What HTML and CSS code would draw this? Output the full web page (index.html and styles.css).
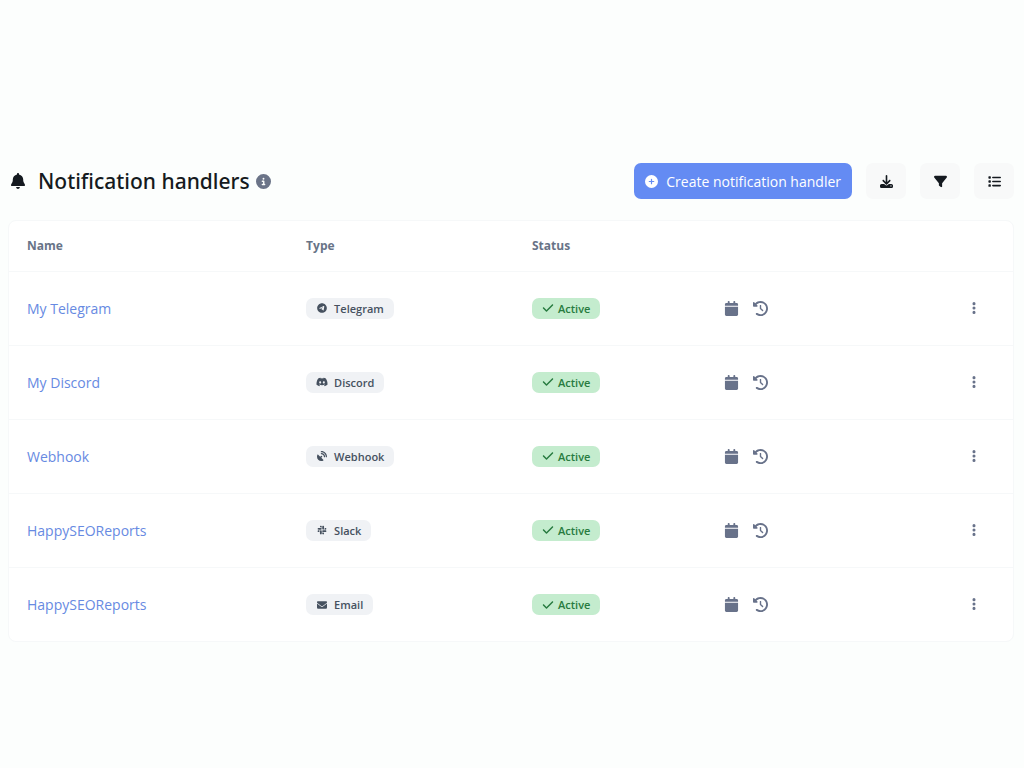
FILE: index.html
```html
<!DOCTYPE html>
<html lang="en">
<head>
<meta charset="utf-8">
<meta name="viewport" content="width=device-width, initial-scale=1">
<title>Notification handlers</title>
<link rel="stylesheet" href="styles.css">
</head>
<body>
<svg class="sprite" aria-hidden="true">
  <symbol id="i-bell" viewBox="0 0 448 512"><path d="M224 0c-17.700 0-32 14.300-32 32v13C112 60 58 126 58 202v32c0 42-14 78-42 112l-8 10c-14 20-10 60 24 60h384c34 0 38-40 24-60l-8-10c-28-34-42-70-42-112v-32c0-76-54-142-134-157V32c0-17.700-14.300-32-32-32zM162 448c8 38 32 60 62 60s54-22 62-60z"/></symbol>
  <symbol id="i-info" viewBox="0 0 512 512"><path d="M256 512A256 256 0 1 0 256 0a256 256 0 1 0 0 512zM216 336h24v-64h-24c-13.300 0-24-10.700-24-24s10.700-24 24-24h48c13.300 0 24 10.700 24 24v88h8c13.300 0 24 10.700 24 24s-10.700 24-24 24h-80c-13.300 0-24-10.700-24-24s10.700-24 24-24zm40-208a32 32 0 1 1 0 64 32 32 0 1 1 0-64z"/></symbol>
  <symbol id="i-plus" viewBox="0 0 512 512"><path d="M256 512A256 256 0 1 0 256 0a256 256 0 1 0 0 512zM232 344v-64h-64c-13.300 0-24-10.700-24-24s10.700-24 24-24h64v-64c0-13.300 10.700-24 24-24s24 10.700 24 24v64h64c13.300 0 24 10.700 24 24s-10.700 24-24 24h-64v64c0 13.300-10.700 24-24 24s-24-10.700-24-24z"/></symbol>
  <symbol id="i-download" viewBox="0 0 512 512"><path d="M288 32c0-17.700-14.300-32-32-32s-32 14.300-32 32v242.700l-73.400-73.400c-12.500-12.500-32.800-12.500-45.300 0s-12.500 32.800 0 45.300l128 128c12.500 12.500 32.800 12.500 45.300 0l128-128c12.500-12.500 12.500-32.800 0-45.300s-32.800-12.500-45.300 0L288 274.700V32zM64 352c-35.300 0-64 28.700-64 64v32c0 35.300 28.700 64 64 64h384c35.300 0 64-28.700 64-64v-32c0-35.300-28.700-64-64-64H346.500l-45.300 45.300c-25 25-65.500 25-90.500 0L165.500 352H64zm368 56a24 24 0 1 1 0 48 24 24 0 1 1 0-48z"/></symbol>
  <symbol id="i-filter" viewBox="0 0 512 512"><path d="M3.900 54.900C10.500 40.900 24.500 32 40 32h432c15.500 0 29.500 8.900 36.100 22.900s4.600 30.500-5.200 42.500L320 320.900V448c0 12.100-6.800 23.200-17.700 28.600s-23.800 4.300-33.500-3l-64-48c-8.100-6-12.800-15.500-12.800-25.600v-79.100L9 97.300C-.7 85.400-2.800 68.800 3.900 54.900z"/></symbol>
  <symbol id="i-list" viewBox="0 0 512 512"><path d="M40 48c-13.300 0-24 10.700-24 24v48c0 13.300 10.700 24 24 24h48c13.300 0 24-10.700 24-24V72c0-13.300-10.700-24-24-24H40zm152 16a32 32 0 0 0 0 64h288a32 32 0 0 0 0-64H192zm0 160a32 32 0 0 0 0 64h288a32 32 0 0 0 0-64H192zm0 160a32 32 0 0 0 0 64h288a32 32 0 0 0 0-64H192zM16 232v48c0 13.300 10.700 24 24 24h48c13.300 0 24-10.700 24-24v-48c0-13.300-10.700-24-24-24H40c-13.300 0-24 10.700-24 24zm24 136c-13.300 0-24 10.700-24 24v48c0 13.300 10.700 24 24 24h48c13.300 0 24-10.700 24-24v-48c0-13.300-10.700-24-24-24H40z"/></symbol>
  <symbol id="i-telegram" viewBox="0 0 496 512"><path d="M248 8C111 8 0 119 0 256s111 248 248 248 248-111 248-248S385 8 248 8zm115 168.700c-3.700 39.200-19.900 134.400-28.100 178.300-3.500 18.600-10.300 24.800-16.900 25.400-14.400 1.300-25.300-9.500-39.300-18.700-21.800-14.300-34.200-23.200-55.300-37.200-24.500-16.100-8.600-25 5.300-39.500 3.700-3.800 67.100-61.500 68.300-66.700.2-.7.300-3.100-1.200-4.400s-3.600-.8-5.100-.5q-3.300.7-104.600 69.100-14.800 10.200-26.900 9.900c-8.900-.2-25.900-5-38.600-9.100-15.500-5-27.900-7.700-26.800-16.300q.8-6.700 18.500-13.700 108.400-47.200 144.600-62.300c68.900-28.600 83.200-33.600 92.500-33.800 2.100 0 6.600.5 9.600 2.900a10.500 10.500 0 0 1 3.500 6.700 43.800 43.800 0 0 1 .5 9.900z"/></symbol>
  <symbol id="i-discord" viewBox="0 0 640 512"><path d="M524.500 69.800a1.500 1.500 0 0 0-.8-.7A485 485 0 0 0 404.100 32a1.800 1.800 0 0 0-1.900.9 338 338 0 0 0-14.900 30.600 448 448 0 0 0-134.400 0 310 310 0 0 0-15.100-30.600 1.900 1.900 0 0 0-1.900-.9 484 484 0 0 0-119.600 37.100 1.700 1.700 0 0 0-.8.700C39.300 183.700 18.400 294.700 28.700 404.400a2 2 0 0 0 .8 1.400 488 488 0 0 0 146.800 74.200 1.900 1.900 0 0 0 2.100-.7 348 348 0 0 0 30-48.800 1.900 1.900 0 0 0-1-2.600 321 321 0 0 1-45.900-21.900 1.900 1.900 0 0 1-.2-3.100c3.100-2.300 6.200-4.700 9.100-7.100a1.800 1.800 0 0 1 1.900-.3c96.200 43.900 200.400 43.900 295.500 0a1.800 1.800 0 0 1 1.900.2c2.900 2.400 6 4.900 9.100 7.200a1.900 1.900 0 0 1-.2 3.100 301 301 0 0 1-45.900 21.800 1.900 1.900 0 0 0-1 2.600 391 391 0 0 0 30 48.800 1.900 1.900 0 0 0 2.100.7 486 486 0 0 0 147-74.200 1.900 1.900 0 0 0 .8-1.400C623.700 277.600 590.900 167.500 524.500 69.800zM222.500 337.600c-29 0-52.800-26.600-52.800-59.200s23.400-59.300 52.800-59.300c29.700 0 53.300 26.800 52.800 59.200 0 32.700-23.400 59.300-52.800 59.300zm195.400 0c-29 0-52.800-26.600-52.800-59.200s23.300-59.300 52.800-59.300c29.700 0 53.300 26.800 52.800 59.200 0 32.700-23.200 59.300-52.800 59.300z"/></symbol>
  <symbol id="i-webhook" viewBox="0 0 512 512"><path d="M192 32c0-17.700 14.300-32 32-32 159.100 0 288 128.900 288 288 0 17.700-14.300 32-32 32s-32-14.300-32-32c0-123.700-100.300-224-224-224-17.700 0-32-14.300-32-32zM60.600 190c-12-12-33-10-41.400 8C6.900 228 0 262 0 296c0 119 97 216 216 216 34 0 68-7 98-19 18-8 20-29 8-41L218 348l24-24a40 40 0 1 0-52-52l-24 24L60.600 190zM224 96c-17.700 0-32 14.300-32 32s14.300 32 32 32c70.700 0 128 57.300 128 128 0 17.700 14.300 32 32 32s32-14.300 32-32c0-106-86-192-192-192z"/></symbol>
  <symbol id="i-slack" viewBox="0 0 448 512"><path d="M94.100 315.100c0 25.900-21.200 47.100-47.100 47.100S0 341 0 315.100 21.200 268 47.100 268h47.100v47.100zm23.700 0c0-25.900 21.200-47.100 47.100-47.100s47.100 21.200 47.100 47.100v117.800c0 25.900-21.200 47.100-47.100 47.100s-47.100-21.200-47.100-47.100V315.100zm47.100-189c-25.900 0-47.100-21.200-47.100-47.100S139 32 164.900 32 212 53.200 212 79.100v47.100h-47.100zm0 23.700c25.900 0 47.100 21.200 47.100 47.100S190.800 244 164.900 244H47.100C21.200 244 0 222.800 0 196.900s21.200-47.100 47.100-47.100h117.800zm189 47.100c0-25.900 21.200-47.100 47.100-47.100s47.100 21.200 47.100 47.100-21.200 47.100-47.100 47.100h-47.100v-47.100zm-23.700 0c0 25.900-21.200 47.100-47.100 47.100S236 222.800 236 196.900V79.100C236 53.200 257.200 32 283.100 32s47.100 21.200 47.100 47.100v117.800zm-47.100 189c25.900 0 47.100 21.200 47.100 47.100S309 480 283.100 480 236 458.800 236 432.900v-47.100h47.100zm0-23.700c-25.900 0-47.100-21.200-47.100-47.100S257.200 268 283.100 268h117.800c25.900 0 47.100 21.200 47.100 47.100s-21.200 47.100-47.100 47.100H283.100z"/></symbol>
  <symbol id="i-email" viewBox="0 0 512 512"><path d="M48 64C21.500 64 0 85.500 0 112c0 15.100 7.100 29.300 19.200 38.400l217.600 163.200c11.400 8.500 27 8.500 38.400 0l217.600-163.200c12.100-9.100 19.200-23.300 19.200-38.400 0-26.500-21.500-48-48-48H48zM0 176v208c0 35.300 28.700 64 64 64h384c35.300 0 64-28.700 64-64V176L294.400 339.200c-22.800 17.100-54 17.100-76.800 0L0 176z"/></symbol>
  <symbol id="i-check" viewBox="0 0 448 512"><path d="M438.600 105.400c12.500 12.500 12.500 32.800 0 45.300l-256 256c-12.500 12.500-32.800 12.500-45.300 0l-128-128c-12.500-12.500-12.500-32.800 0-45.300s32.800-12.500 45.300 0L160 338.700l233.400-233.300c12.500-12.500 32.800-12.500 45.300 0z"/></symbol>
  <symbol id="i-calendar" viewBox="0 0 448 512"><path d="M96 32v32H48C21.500 64 0 85.500 0 112v48h448v-48c0-26.500-21.500-48-48-48h-48V32c0-17.700-14.300-32-32-32s-32 14.300-32 32v32H160V32c0-17.700-14.300-32-32-32S96 14.300 96 32zm352 160H0v272c0 26.500 21.500 48 48 48h352c26.500 0 48-21.500 48-48V192z"/></symbol>
  <symbol id="i-history" viewBox="0 0 512 512"><path d="M75 75 41 41C25.900 25.900 0 36.600 0 57.900V168c0 13.300 10.700 24 24 24h110.100c21.400 0 32.100-25.900 17-41l-30.800-30.800C155 85.500 203 64 256 64c106 0 192 86 192 192s-86 192-192 192c-40.800 0-78.600-12.700-109.700-34.400-14.500-10.100-34.400-6.600-44.600 7.900s-6.600 34.400 7.900 44.600C151.200 495 201.700 512 256 512c141.400 0 256-114.600 256-256S397.400 0 256 0C185.300 0 121.300 28.700 75 75zm181 53c-13.300 0-24 10.700-24 24v104c0 6.400 2.500 12.500 7 17l72 72c9.400 9.400 24.600 9.400 33.900 0s9.400-24.600 0-33.900l-65-65V152c0-13.300-10.700-24-24-24z"/></symbol>
  <symbol id="i-dots" viewBox="0 0 128 512"><path d="M64 360a56 56 0 1 0 0 112 56 56 0 1 0 0-112zm0-160a56 56 0 1 0 0 112 56 56 0 1 0 0-112zm56-104A56 56 0 1 0 8 96a56 56 0 1 0 112 0z"/></symbol>
</svg>

<main class="page">
  <header class="toolbar">
    <div class="heading">
      <svg class="icon bell" aria-hidden="true"><use href="#i-bell"/></svg>
      <h1 class="title">Notification handlers</h1>
      <svg class="icon info" role="img" aria-label="Information"><use href="#i-info"/></svg>
    </div>
    <div class="actions">
      <button class="btn btn-primary" type="button"><svg class="icon plus" aria-hidden="true"><use href="#i-plus"/></svg>Create notification handler</button>
      <button class="btn btn-light" type="button" aria-label="Export"><svg class="icon tool" aria-hidden="true"><use href="#i-download"/></svg></button>
      <button class="btn btn-light" type="button" aria-label="Filters"><svg class="icon tool" aria-hidden="true"><use href="#i-filter"/></svg></button>
      <button class="btn btn-light" type="button" aria-label="Bulk actions"><svg class="icon tool" aria-hidden="true"><use href="#i-list"/></svg></button>
    </div>
  </header>

  <div class="card">
    <table class="table">
      <thead>
        <tr><th class="col-name" scope="col">Name</th><th class="col-type" scope="col">Type</th><th class="col-status" scope="col">Status</th><td></td><td></td></tr>
      </thead>
      <tbody>
        <tr>
          <td><a class="name" href="#">My Telegram</a></td>
          <td><span class="badge"><svg class="icon kind" aria-hidden="true"><use href="#i-telegram"/></svg>Telegram</span></td>
          <td><span class="badge badge-active"><svg class="icon check" aria-hidden="true"><use href="#i-check"/></svg>Active</span></td>
          <td><div class="dates"><svg class="icon date" role="img" aria-label="Created"><use href="#i-calendar"/></svg><svg class="icon date" role="img" aria-label="Last changed"><use href="#i-history"/></svg></div></td>
          <td class="col-menu"><button class="menu" type="button" aria-label="Options"><svg class="icon dots" aria-hidden="true"><use href="#i-dots"/></svg></button></td>
        </tr>
        <tr>
          <td><a class="name" href="#">My Discord</a></td>
          <td><span class="badge"><svg class="icon kind" aria-hidden="true"><use href="#i-discord"/></svg>Discord</span></td>
          <td><span class="badge badge-active"><svg class="icon check" aria-hidden="true"><use href="#i-check"/></svg>Active</span></td>
          <td><div class="dates"><svg class="icon date" role="img" aria-label="Created"><use href="#i-calendar"/></svg><svg class="icon date" role="img" aria-label="Last changed"><use href="#i-history"/></svg></div></td>
          <td class="col-menu"><button class="menu" type="button" aria-label="Options"><svg class="icon dots" aria-hidden="true"><use href="#i-dots"/></svg></button></td>
        </tr>
        <tr>
          <td><a class="name" href="#">Webhook</a></td>
          <td><span class="badge"><svg class="icon kind" aria-hidden="true"><use href="#i-webhook"/></svg>Webhook</span></td>
          <td><span class="badge badge-active"><svg class="icon check" aria-hidden="true"><use href="#i-check"/></svg>Active</span></td>
          <td><div class="dates"><svg class="icon date" role="img" aria-label="Created"><use href="#i-calendar"/></svg><svg class="icon date" role="img" aria-label="Last changed"><use href="#i-history"/></svg></div></td>
          <td class="col-menu"><button class="menu" type="button" aria-label="Options"><svg class="icon dots" aria-hidden="true"><use href="#i-dots"/></svg></button></td>
        </tr>
        <tr>
          <td><a class="name" href="#">HappySEOReports</a></td>
          <td><span class="badge"><svg class="icon kind" aria-hidden="true"><use href="#i-slack"/></svg>Slack</span></td>
          <td><span class="badge badge-active"><svg class="icon check" aria-hidden="true"><use href="#i-check"/></svg>Active</span></td>
          <td><div class="dates"><svg class="icon date" role="img" aria-label="Created"><use href="#i-calendar"/></svg><svg class="icon date" role="img" aria-label="Last changed"><use href="#i-history"/></svg></div></td>
          <td class="col-menu"><button class="menu" type="button" aria-label="Options"><svg class="icon dots" aria-hidden="true"><use href="#i-dots"/></svg></button></td>
        </tr>
        <tr>
          <td><a class="name" href="#">HappySEOReports</a></td>
          <td><span class="badge"><svg class="icon kind" aria-hidden="true"><use href="#i-email"/></svg>Email</span></td>
          <td><span class="badge badge-active"><svg class="icon check" aria-hidden="true"><use href="#i-check"/></svg>Active</span></td>
          <td><div class="dates"><svg class="icon date" role="img" aria-label="Created"><use href="#i-calendar"/></svg><svg class="icon date" role="img" aria-label="Last changed"><use href="#i-history"/></svg></div></td>
          <td class="col-menu"><button class="menu" type="button" aria-label="Options"><svg class="icon dots" aria-hidden="true"><use href="#i-dots"/></svg></button></td>
        </tr>
      </tbody>
    </table>
  </div>
</main>
</body>
</html>
```
FILE: styles.css
```css
* { box-sizing: border-box; }

body {
  margin: 0;
  background: #fcfefd;
  color: #151a20;
  font-family: "Segoe UI", "Open Sans", "Noto Sans", sans-serif;
  font-size: 14px;
}

.sprite { position: absolute; width: 0; height: 0; }

.icon {
  display: block;
  flex: none;
  fill: currentColor;
}

.page { padding: 163px 10px 24px 8px; }

.toolbar {
  display: flex;
  align-items: center;
  justify-content: space-between;
  gap: 16px;
  margin-bottom: 21px;
}

.heading {
  display: flex;
  align-items: center;
  padding-left: 2px;
}

.bell { width: 16px; height: 16px; margin-right: 12px; }

.title {
  margin: 0;
  font-family: "Segoe UI", "Noto Sans", sans-serif;
  font-size: 21px;
  font-weight: 500;
  line-height: 28px;
}

.info { width: 15px; height: 15px; margin-left: 6px; color: #6b7488; }

.actions { display: flex; gap: 14px; }

.btn {
  display: flex;
  align-items: center;
  justify-content: center;
  height: 36px;
  border: 0;
  border-radius: 7px;
  font: inherit;
  cursor: pointer;
}

.btn-primary {
  gap: 8px;
  padding: 0 11px;
  background: #648bf3;
  color: #fff;
}

.btn-light {
  width: 40px;
  background: #f8f9f9;
  color: #151a20;
}

.plus { width: 13px; height: 13px; }
.tool { width: 13px; height: 13px; }

.card {
  overflow: hidden;
  border: 1px solid #f6f8f9;
  border-radius: 8px;
  background: #fff;
}

.table {
  width: 100%;
  border-collapse: collapse;
  table-layout: fixed;
}

.table th,
.table td {
  height: 74px;
  padding: 0 18px;
  border-top: 1px solid #f6f8f9;
  text-align: left;
  vertical-align: middle;
}

.table thead th,
.table thead td {
  height: 50px;
  border-top: 0;
  color: #687387;
  font-size: 12px;
  font-weight: 700;
}

.table .col-name { width: 27.8%; }
.table .col-type { width: 22.5%; }
.table .col-status { width: 19.1%; }
.table .col-menu { padding-right: 29px; }

.name { color: #678ae2; text-decoration: none; }

.badge {
  display: inline-flex;
  align-items: center;
  gap: 6px;
  height: 21px;
  padding: 0 10px;
  border-radius: 7px;
  background: #f0f2f5;
  color: #46515f;
  font-size: 11px;
  font-weight: 600;
  vertical-align: middle;
}

.badge-active {
  gap: 4px;
  background: #c4ecce;
  color: #287b40;
}

.kind { width: 12px; height: 10px; }
.check { width: 12px; height: 12px; }

.dates { display: flex; gap: 14px; color: #68728a; }
.date { width: 15px; height: 15px; }

.menu {
  display: flex;
  justify-content: center;
  width: 20px;
  margin-left: auto;
  padding: 4px 0;
  border: 0;
  background: none;
  color: #68728a;
  cursor: pointer;
}

.dots { width: 4px; height: 14px; }
```
